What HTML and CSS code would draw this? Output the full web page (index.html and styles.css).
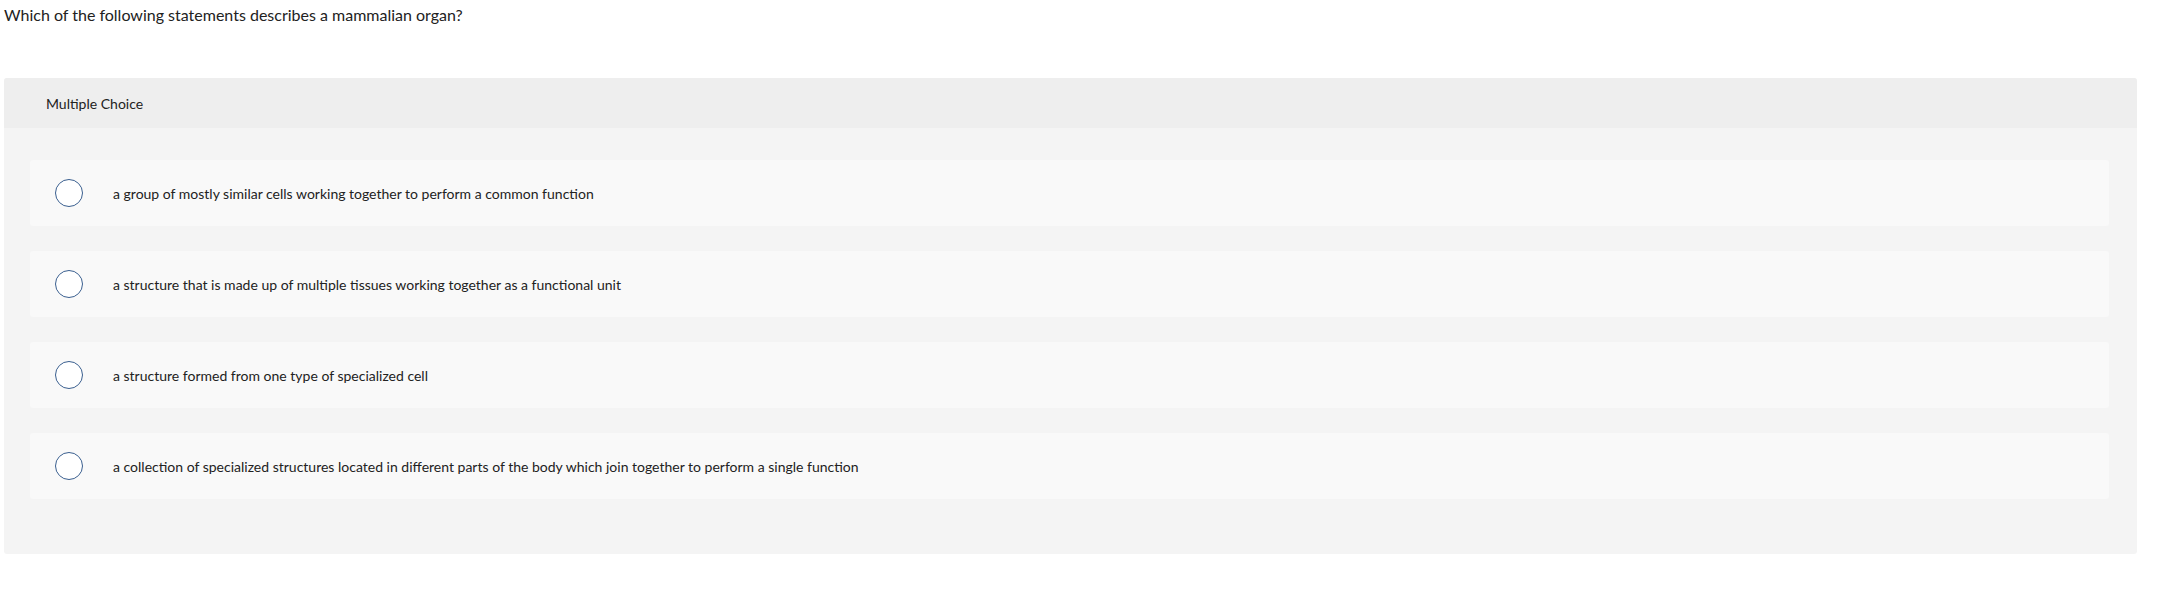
FILE: index.html
```html
<!DOCTYPE html>
<html>
<head>
<meta charset="utf-8">
<link rel="stylesheet" href="styles.css">
</head>
<body>
<div class="page">
  <p class="question">Which of the following statements describes a mammalian organ?</p>
  <div class="panel">
    <div class="panel-header">Multiple Choice</div>
    <div class="panel-body">
      <div class="option"><span class="radio"></span><span class="label">a group of mostly similar cells working together to perform a common function</span></div>
      <div class="option"><span class="radio"></span><span class="label">a structure that is made up of multiple tissues working together as a functional unit</span></div>
      <div class="option"><span class="radio"></span><span class="label">a structure formed from one type of specialized cell</span></div>
      <div class="option"><span class="radio"></span><span class="label">a collection of specialized structures located in different parts of the body which join together to perform a single function</span></div>
    </div>
  </div>
</div>
</body>
</html>
```
FILE: styles.css
```css
html, body {
  margin: 0;
  padding: 0;
  background: #ffffff;
}
body {
  font-family: Lato, "Open Sans", sans-serif;
  color: #222222;
}
.page {
  padding: 0 43px 0 4px;
}
.question {
  margin: 0;
  padding-top: 5px;
  font-size: 16px;
  line-height: 20px;
  height: 73px;
}
.panel {
  background: #f4f4f4;
  border-radius: 3px;
  overflow: hidden;
}
.panel-header {
  background: #eeeeee;
  height: 50px;
  display: flex;
  align-items: center;
  padding-left: 42px;
  font-size: 14px;
}
.panel-body {
  display: flex;
  flex-direction: column;
  gap: 25px;
  padding: 32px 28px 55px 26px;
}
.option {
  background: #f9f9f9;
  border-radius: 3px;
  height: 66px;
  display: flex;
  align-items: center;
  padding-left: 25px;
  font-size: 14px;
}
.radio {
  width: 26px;
  height: 26px;
  border: 1px solid #3a5f8f;
  border-radius: 50%;
  background: #ffffff;
  flex: none;
}
.label {
  margin-left: 30px;
}
```
